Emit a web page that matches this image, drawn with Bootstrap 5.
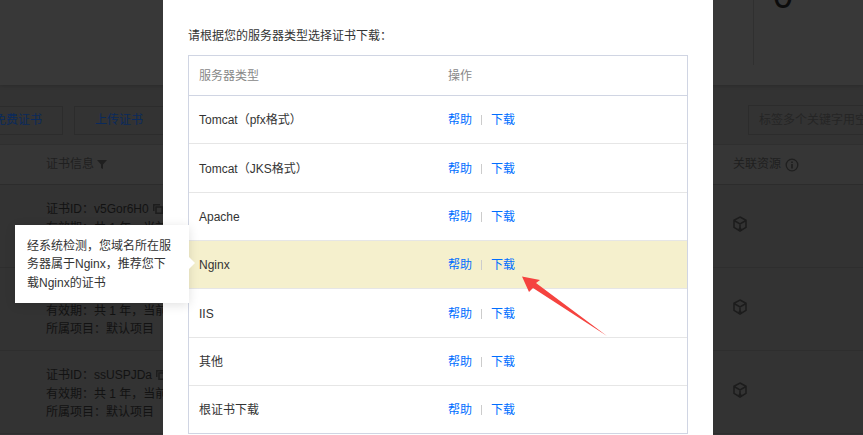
<!DOCTYPE html>
<html lang="zh"><head><meta charset="utf-8"><title>证书下载</title>
<link href="https://cdn.jsdelivr.net/npm/bootstrap@5.3.0/dist/css/bootstrap.min.css" rel="stylesheet">
<style>
html,body{height:435px;overflow:hidden}
body{font:12px/18px "Liberation Sans","Noto Sans CJK SC",sans-serif;background:#333;color:#161616}
.stage{position:relative;width:863px;height:435px;overflow:hidden}
.top-band{height:85px;background:#383838;box-shadow:0 1px 4px rgba(0,0,0,.18);position:relative}
.top-num{position:absolute;left:773px;top:-24px;font-size:36px;line-height:40px;color:#0c0c0c}
.top-rule{position:absolute;left:753px;top:0;height:65px;border-left:1px solid #303030}
.tools{height:59px;padding:21px 0 10px;gap:11px;margin-left:-27px}
.ghost-btn{height:29px;width:90px;border:1px solid #2c2c2c;color:#0a2a5c;line-height:27px;text-align:center;flex:none}
.ghost-search{position:absolute;left:748px;top:105px;width:130px;height:30px;border:1px solid #2c2c2c;color:#252525;line-height:28px;padding-left:10px;white-space:nowrap;overflow:hidden}
.head-row{height:41px;border-top:1px solid #2f2f2f;border-bottom:1px solid #2c2c2c;background:#363636;color:#1f1f1f;padding-left:46px;line-height:39px;position:relative}
.head-right{position:absolute;left:733px;top:0;display:flex;align-items:center;gap:4px}
.cert-row{height:83px;padding:15px 0 0 46px;border-bottom:1px solid #2e2e2e;position:relative;color:#121212;white-space:nowrap;line-height:18.5px}
.cube{position:absolute;left:733px;top:31px}
.copy-ic{margin-left:4px;vertical-align:-1px}
.dlg{position:absolute;left:163px;top:0;width:550px;height:435px;background:#fff;padding:27px 25px 0;color:#333}
.dlg-intro{height:28px;margin:0;line-height:18px;color:#333}
.dlg-wrap{width:500px;border:1px solid #d0d5e3;height:379px}
.dlg-table{margin:0;table-layout:fixed;width:498px;font-size:12px;line-height:18px;color:#333}
.dlg-table th,.dlg-table td{padding:2px 0 0 10px;vertical-align:middle;border-bottom:1px solid #e6e6e6;height:48px;box-shadow:none;background:transparent;color:#333}
.dlg-table th{font-weight:400;color:#888;height:39px;border-bottom-color:#d0d5e3}
.dlg-table tbody tr:nth-child(2) td,.dlg-table tbody tr:nth-child(5) td{height:49px}
.dlg-table tr:last-child td{border-bottom:0}
.dlg-table .hit td{background:#f5f0cd}
.dlg-link{color:#006eff;text-decoration:none}
.sep{display:inline-block;height:10px;border-left:1px solid #ccc;margin:0 9px 0 9px;vertical-align:-1px}
.tip{position:absolute;left:15px;top:225px;width:174px;height:78px;background:#fff;padding:12px 12px;color:#333;box-shadow:0 2px 10px rgba(0,0,0,.12)}
.tip::after{content:"";position:absolute;left:174px;top:32px;border:6px solid transparent;border-left-color:#fff;border-right-width:0}
.tip-text{margin:0;line-height:18.3px}
.arrow{position:absolute;left:515px;top:270px}
</style></head><body>
<div class="stage">
  <div class="top-band"><div class="top-num">0</div><div class="top-rule"></div></div>
  <div class="tools d-flex"><div class="ghost-btn">免费证书</div><div class="ghost-btn">上传证书</div></div>
  <div class="ghost-search">标签多个关键字用空格</div>
  <div class="head-row">证书信息 <svg width="10" height="11" viewBox="0 0 10 11"><path d="M0 1h10L6 5.500V10L4 9V5.500z" fill="#1f1f1f"/></svg>
    <div class="head-right">关联资源 <svg width="14" height="14" viewBox="0 0 14 14"><circle cx="7" cy="7" r="5.800" fill="none" stroke="#1f1f1f" stroke-width="1.300"/><path d="M6.200 3.400h1.600v1.500H6.200zM6.200 6h1.600v4.600H6.200z" fill="#1f1f1f"/></svg></div>
  </div>
  <div class="cert-row">证书ID：v5Gor6H0<svg class="copy-ic" width="10" height="10" viewBox="0 0 10 10"><path d="M.75 7V.75H7M3 3h6.200v6.200H3z" fill="none" stroke="#1d1d1d" stroke-width="1.500"/></svg><br>有效期：共 1 年，当前<br>所属项目：默认项目
    <svg class="cube" width="14" height="16" viewBox="0 0 14 16"><path d="M7 1l6 3.300v7L7 15l-6-3.700v-7zM1 4.500l6 3.500 6-3.500M7 8v4" fill="none" stroke="#1c1c1c" stroke-width="1.500"/><circle cx="7" cy="13" r="1.500" fill="#1c1c1c"/></svg></div>
  <div class="cert-row">证书ID：qK2mTz8A<svg class="copy-ic" width="10" height="10" viewBox="0 0 10 10"><path d="M.75 7V.75H7M3 3h6.200v6.200H3z" fill="none" stroke="#1d1d1d" stroke-width="1.500"/></svg><br>有效期：共 1 年，当前<br>所属项目：默认项目
    <svg class="cube" width="14" height="16" viewBox="0 0 14 16"><path d="M7 1l6 3.300v7L7 15l-6-3.700v-7zM1 4.500l6 3.500 6-3.500M7 8v4" fill="none" stroke="#1c1c1c" stroke-width="1.500"/><circle cx="7" cy="13" r="1.500" fill="#1c1c1c"/></svg></div>
  <div class="cert-row">证书ID：ssUSPJDa<svg class="copy-ic" width="10" height="10" viewBox="0 0 10 10"><path d="M.75 7V.75H7M3 3h6.200v6.200H3z" fill="none" stroke="#1d1d1d" stroke-width="1.500"/></svg><br>有效期：共 1 年，当前<br>所属项目：默认项目
    <svg class="cube" width="14" height="16" viewBox="0 0 14 16"><path d="M7 1l6 3.300v7L7 15l-6-3.700v-7zM1 4.500l6 3.500 6-3.500M7 8v4" fill="none" stroke="#1c1c1c" stroke-width="1.500"/><circle cx="7" cy="13" r="1.500" fill="#1c1c1c"/></svg></div>

  <div class="dlg">
    <p class="dlg-intro">请根据您的服务器类型选择证书下载：</p>
    <div class="dlg-wrap">
      <table class="table dlg-table">
        <thead><tr><th>服务器类型</th><th>操作</th></tr></thead>
        <tbody>
          <tr><td>Tomcat（pfx格式）</td><td><a class="dlg-link" href="#">帮助</a><span class="sep"></span><a class="dlg-link" href="#">下载</a></td></tr>
          <tr><td>Tomcat（JKS格式）</td><td><a class="dlg-link" href="#">帮助</a><span class="sep"></span><a class="dlg-link" href="#">下载</a></td></tr>
          <tr><td>Apache</td><td><a class="dlg-link" href="#">帮助</a><span class="sep"></span><a class="dlg-link" href="#">下载</a></td></tr>
          <tr class="hit"><td>Nginx</td><td><a class="dlg-link" href="#">帮助</a><span class="sep"></span><a class="dlg-link" href="#">下载</a></td></tr>
          <tr><td>IIS</td><td><a class="dlg-link" href="#">帮助</a><span class="sep"></span><a class="dlg-link" href="#">下载</a></td></tr>
          <tr><td>其他</td><td><a class="dlg-link" href="#">帮助</a><span class="sep"></span><a class="dlg-link" href="#">下载</a></td></tr>
          <tr><td>根证书下载</td><td><a class="dlg-link" href="#">帮助</a><span class="sep"></span><a class="dlg-link" href="#">下载</a></td></tr>
        </tbody>
      </table>
    </div>
  </div>

  <div class="tip"><p class="tip-text">经系统检测，您域名所在服务器属于Nginx，推荐您下载Nginx的证书</p></div>
  <svg class="arrow" width="100" height="70" viewBox="515 270 100 70"><polygon points="522,276.500 540,280 536,283 607,336 533,288 529,292" fill="#f5433f"/></svg>
</div>
</body></html>
